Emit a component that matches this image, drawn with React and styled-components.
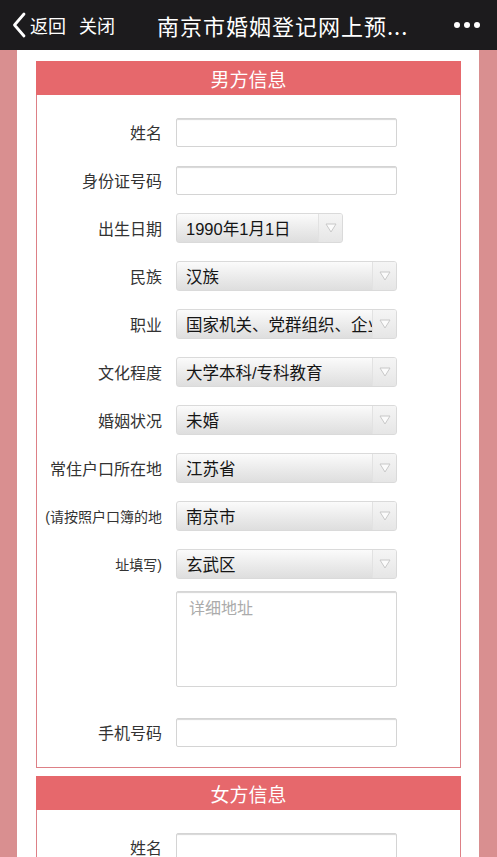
import React from "react";
import styled, { createGlobalStyle } from "styled-components";

const Global = createGlobalStyle`
  html, body { margin: 0; padding: 0; }
  body {
    background: #d98f90;
    font-family: "Liberation Sans", "Noto Sans CJK SC", sans-serif;
    -webkit-font-smoothing: antialiased;
  }
  * { box-sizing: border-box; }
`;

const Page = styled.div`
  width: 497px;
  height: 857px;
  overflow: hidden;
  display: flex;
  flex-direction: column;
  background: #d98f90;
`;

const TopBar = styled.div`
  height: 50px;
  flex: none;
  background: #1c1b1d;
  display: flex;
  align-items: center;
  color: #fff;
  padding: 0 0 0 12px;
`;

const NavLink = styled.span`
  font-family: "Noto Sans CJK SC", sans-serif;
  font-size: 18px;
  line-height: 1;
  margin-right: ${(p) => p.$mr || 0}px;
`;

const Title = styled.div`
  font-family: "Noto Sans CJK SC", sans-serif;
  font-size: 22px;
  letter-spacing: 1px;
  white-space: nowrap;
  margin-left: 42px;
  flex: 1;
`;

const Dots = styled.div`
  display: flex;
  gap: 4px;
  margin-right: 17px;
`;

const Dot = styled.span`
  width: 6px;
  height: 6px;
  border-radius: 50%;
  background: #fff;
`;

const Sheet = styled.div`
  margin: 0 18px 0 17px;
  background: #fff;
  flex: 1;
  padding: 11px 18px 0 19px;
  display: flex;
  flex-direction: column;
  gap: 8px;
`;

const Card = styled.section`
  border: 1px solid #dd8086;
  border-top: none;
  background: #fff;
  padding-bottom: ${(p) => p.$pb || 0}px;
`;

const CardHeader = styled.div`
  height: 34px;
  margin: 0 -1px;
  background: #e6686c;
  color: #fff;
  font-family: "Noto Sans CJK SC", sans-serif;
  font-size: 19px;
  display: flex;
  align-items: center;
  justify-content: center;
  padding-top: 1px;
`;

const Rows = styled.div`
  padding-top: 13px;
  display: flex;
  flex-direction: column;
`;

const Row = styled.div`
  display: grid;
  grid-template-columns: 125px auto;
  column-gap: 14px;
  align-items: center;
  min-height: 48px;
  margin-top: ${(p) => p.$mt || 0}px;
`;

const Label = styled.label`
  text-align: right;
  font-family: "Liberation Sans", "Noto Sans CJK SC", sans-serif;
  font-size: ${(p) => (p.$small ? 14 : 16)}px;
  color: #333;
  white-space: nowrap;
`;

const TextInput = styled.div`
  width: 221px;
  height: 29px;
  border: 1px solid #d4d4d4;
  border-radius: 2px;
  background: #fff;
  box-shadow: inset 0 2px 1px -1px #d6d6d6;
`;

const TextArea = styled.div`
  width: 221px;
  height: 96px;
  margin: 3px 0 0;
  border: 1px solid #d6d6d6;
  border-radius: 2px;
  background: #fff;
  box-shadow: inset 0 2px 1px -1px #d6d6d6;
  color: #ababab;
  font-family: "Noto Sans CJK SC", sans-serif;
  font-size: 16px;
  padding: 3px 12px;
`;

const Select = styled.div`
  width: ${(p) => p.$w || 221}px;
  height: 30px;
  border: 1px solid #dadada;
  border-radius: 3px;
  background: linear-gradient(#fbfbfb, #e9e9e9 60%, #dedede);
  display: flex;
  overflow: hidden;
`;

const SelectText = styled.div`
  flex: 1;
  min-width: 0;
  overflow: hidden;
  white-space: nowrap;
  padding-left: 9px;
  display: flex;
  align-items: center;
  font-family: "Liberation Sans", "Noto Sans CJK SC", sans-serif;
  font-size: 16.5px;
  color: #151515;
`;

const ArrowBox = styled.div`
  flex: none;
  width: 24px;
  border-left: 1px solid #e2e2e2;
  background: linear-gradient(#f5f5f5, #e6e6e6);
  display: flex;
  align-items: center;
  justify-content: center;
`;

const Caret = () => (
  <svg width="12" height="10" viewBox="0 0 12 10">
    <polygon points="1,1 11,1 6,9" fill="#fbfbfb" stroke="#c8c8c8" strokeWidth="1" strokeLinejoin="round" />
  </svg>
);

const Chevron = () => (
  <svg width="15" height="26" viewBox="0 0 15 26" style={{ marginRight: 3 }}>
    <polyline points="12,2 2.5,13 12,24" fill="none" stroke="#fff" strokeWidth="2.8" strokeLinecap="round" strokeLinejoin="round" />
  </svg>
);

const Dropdown = ({ value, w }) => (
  <Select $w={w}>
    <SelectText>{value}</SelectText>
    <ArrowBox>
      <Caret />
    </ArrowBox>
  </Select>
);

export default function App() {
  return (
    <Page>
      <Global />
      <TopBar>
        <Chevron />
        <NavLink $mr={13}>返回</NavLink>
        <NavLink>关闭</NavLink>
        <Title>南京市婚姻登记网上预...</Title>
        <Dots>
          <Dot />
          <Dot />
          <Dot />
        </Dots>
      </TopBar>
      <Sheet>
        <Card $pb={11}>
          <CardHeader>男方信息</CardHeader>
          <Rows>
            <Row>
              <Label>姓名</Label>
              <TextInput />
            </Row>
            <Row>
              <Label>身份证号码</Label>
              <TextInput />
            </Row>
            <Row>
              <Label>出生日期</Label>
              <Dropdown value="1990年1月1日" w={167} />
            </Row>
            <Row>
              <Label>民族</Label>
              <Dropdown value="汉族" />
            </Row>
            <Row>
              <Label>职业</Label>
              <Dropdown value="国家机关、党群组织、企业、事业单位负责人" />
            </Row>
            <Row>
              <Label>文化程度</Label>
              <Dropdown value="大学本科/专科教育" />
            </Row>
            <Row>
              <Label>婚姻状况</Label>
              <Dropdown value="未婚" />
            </Row>
            <Row>
              <Label>常住户口所在地</Label>
              <Dropdown value="江苏省" />
            </Row>
            <Row>
              <Label $small>(请按照户口簿的地</Label>
              <Dropdown value="南京市" />
            </Row>
            <Row>
              <Label $small>址填写)</Label>
              <Dropdown value="玄武区" />
            </Row>
            <Row>
              <span />
              <TextArea>详细地址</TextArea>
            </Row>
            <Row $mt={21}>
              <Label>手机号码</Label>
              <TextInput />
            </Row>
          </Rows>
        </Card>
        <Card>
          <CardHeader>女方信息</CardHeader>
          <Rows>
            <Row>
              <Label>姓名</Label>
              <TextInput />
            </Row>
          </Rows>
        </Card>
      </Sheet>
    </Page>
  );
}
